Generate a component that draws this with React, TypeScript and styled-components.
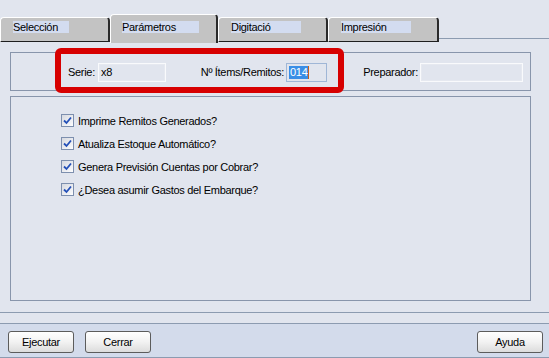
import React from "react";
import styled, { createGlobalStyle } from "styled-components";

const Global = createGlobalStyle`
  html, body { margin: 0; padding: 0; background: #e1e5ee; }
  * { box-sizing: border-box; }
`;

const FONT = `"Liberation Sans", Arial, sans-serif`;

const Window = styled.div`
  position: relative;
  width: 549px;
  height: 358px;
  background: #e1e5ee;
  font-family: ${FONT};
  font-size: 11px;
  letter-spacing: -0.3px;
  color: #000;
  display: flex;
  flex-direction: column;
  overflow: hidden;
`;

const TabStrip = styled.div`
  height: 43px;
  padding-top: 14px;
  display: flex;
  align-items: flex-start;
`;

const Tab = styled.div<{ $active?: boolean; $w: number }>`
  width: ${(p) => p.$w}px;
  height: ${(p) => (p.$active ? 29 : 25)}px;
  margin-top: ${(p) => (p.$active ? 0 : 3)}px;
  background: #c3c3c3;
  border-top: 1px solid #ffffff;
  border-left: 1px solid #ffffff;
  border-right: 2px solid #2a2a2a;
  border-bottom: ${(p) => (p.$active ? "none" : "1px solid #1e1e1e")};
  border-radius: 4px 4px 0 0;
  padding: ${(p) => (p.$active ? 6 : 3)}px 0 0 ${(p) => (p.$active ? 11 : 12)}px;
  display: flex;
  align-items: flex-start;
`;

const TabLabel = styled.span<{ $w: number }>`
  display: block;
  width: ${(p) => p.$w}px;
  height: 12px;
  line-height: 12px;
  background: #d3dcf0;
  white-space: nowrap;
`;

const TabFill = styled.div`
  flex: 1;
  height: 25px;
  border-bottom: 1px solid #8c9bb0;
`;

const Group = styled.div<{ $h: number; $mt: number }>`
  margin: ${(p) => p.$mt}px 0 0 10px;
  width: 521px;
  height: ${(p) => p.$h}px;
  border: 1px solid #8895ab;
`;

const FieldRow = styled.div`
  height: 100%;
  display: flex;
  align-items: center;
  padding-left: 57px;
`;

const Label = styled.span<{ $w: number; $ml: number; $right?: boolean }>`
  width: ${(p) => p.$w}px;
  margin-left: ${(p) => p.$ml}px;
  text-align: ${(p) => (p.$right ? "right" : "left")};
  white-space: nowrap;
`;

const Input = styled.div<{ $w: number; $focus?: boolean }>`
  width: ${(p) => p.$w}px;
  height: 19px;
  margin-left: 2px;
  margin-top: 1px;
  border: 1px solid ${(p) => (p.$focus ? "#9fb6d6" : "#f9fafc")};
  box-shadow: ${(p) => (p.$focus ? "none" : "inset 0 0 0 1px #e6e9f0")};
  background: #e1e5ee;
  padding: 2px 0 0 2px;
  display: flex;
  align-items: flex-start;
  line-height: 13px;
`;

const Selected = styled.span`
  background: #3a8ee6;
  color: #fff;
  padding: 0 1px;
`;

const Caret = styled.span`
  width: 1px;
  height: 13px;
  background: #c8601a;
`;

const CheckList = styled.div`
  padding: 12px 0 0 50px;
  display: flex;
  flex-direction: column;
`;

const CheckRow = styled.div`
  height: 23px;
  display: flex;
  align-items: center;
`;

const Box = styled.span`
  width: 13px;
  height: 13px;
  border: 1px solid #7d8fae;
  background: linear-gradient(135deg, #d6d9e0 0%, #f4f5f8 80%, #ffffff 100%);
  display: flex;
  align-items: center;
  justify-content: center;
`;

const CheckText = styled.span`
  margin-left: 4px;
  white-space: nowrap;
`;

const Separator = styled.div`
  margin-top: 11px;
  height: 1px;
  background: #8c9bb0;
`;

const ButtonBar = styled.div`
  margin-top: 10px;
  height: 35px;
  background: #d3dbeb;
  border-top: 1px solid #8c9bb0;
  border-bottom: 1px solid #8c9bb0;
  display: flex;
  align-items: flex-start;
  padding: 7px 6px 0 8px;
  gap: 11px;
`;

const Button = styled.button<{ $push?: boolean }>`
  width: 66px;
  height: 22px;
  margin-left: ${(p) => (p.$push ? "auto" : "0")};
  border: 1px solid #5c5c5c;
  border-radius: 3px;
  background: linear-gradient(#ffffff 0%, #f2f2f2 50%, #dcdcdc 100%);
  font-family: ${FONT};
  font-size: 11px;
  letter-spacing: -0.3px;
  color: #000;
  padding: 0;
`;

const Highlight = styled.div`
  position: absolute;
  left: 55px;
  top: 48px;
  width: 289px;
  height: 45px;
  border: 6px solid #d70000;
  border-radius: 6px;
  pointer-events: none;
`;

const Check = () => (
  <svg width="9" height="9" viewBox="0 0 9 9">
    <path d="M1 4.5 L3.5 7 L8 1.5" fill="none" stroke="#2450b8" strokeWidth="1.8" />
  </svg>
);

const tabs = [
  { label: "Selección", w: 110, lw: 56 },
  { label: "Parámetros", w: 108, lw: 77, active: true },
  { label: "Digitació", w: 110, lw: 70 },
  { label: "Impresión", w: 111, lw: 70 },
];

const checks = [
  "Imprime Remitos Generados?",
  "Atualiza Estoque Automático?",
  "Genera Previsión Cuentas por Cobrar?",
  "¿Desea asumir Gastos del Embarque?",
];

export default function App() {
  return (
    <Window>
      <Global />
      <TabStrip>
        {tabs.map((t) => (
          <Tab key={t.label} $w={t.w} $active={t.active}>
            <TabLabel $w={t.lw}>{t.label}</TabLabel>
          </Tab>
        ))}
        <TabFill />
      </TabStrip>
      <Group $h={39} $mt={9}>
        <FieldRow>
          <Label $w={28} $ml={0}>Serie:</Label>
          <Input $w={68}>x8</Input>
          <Label $w={86} $ml={32} $right>Nº Ítems/Remitos:</Label>
          <Input $w={41} $focus>
            <Selected>014</Selected>
            <Caret />
          </Input>
          <Label $w={56} $ml={35} $right>Preparador:</Label>
          <Input $w={103} />
        </FieldRow>
      </Group>
      <Group $h={205} $mt={5}>
        <CheckList>
          {checks.map((c) => (
            <CheckRow key={c}>
              <Box>
                <Check />
              </Box>
              <CheckText>{c}</CheckText>
            </CheckRow>
          ))}
        </CheckList>
      </Group>
      <Separator />
      <ButtonBar>
        <Button>Ejecutar</Button>
        <Button>Cerrar</Button>
        <Button $push>Ayuda</Button>
      </ButtonBar>
      <Highlight />
    </Window>
  );
}
